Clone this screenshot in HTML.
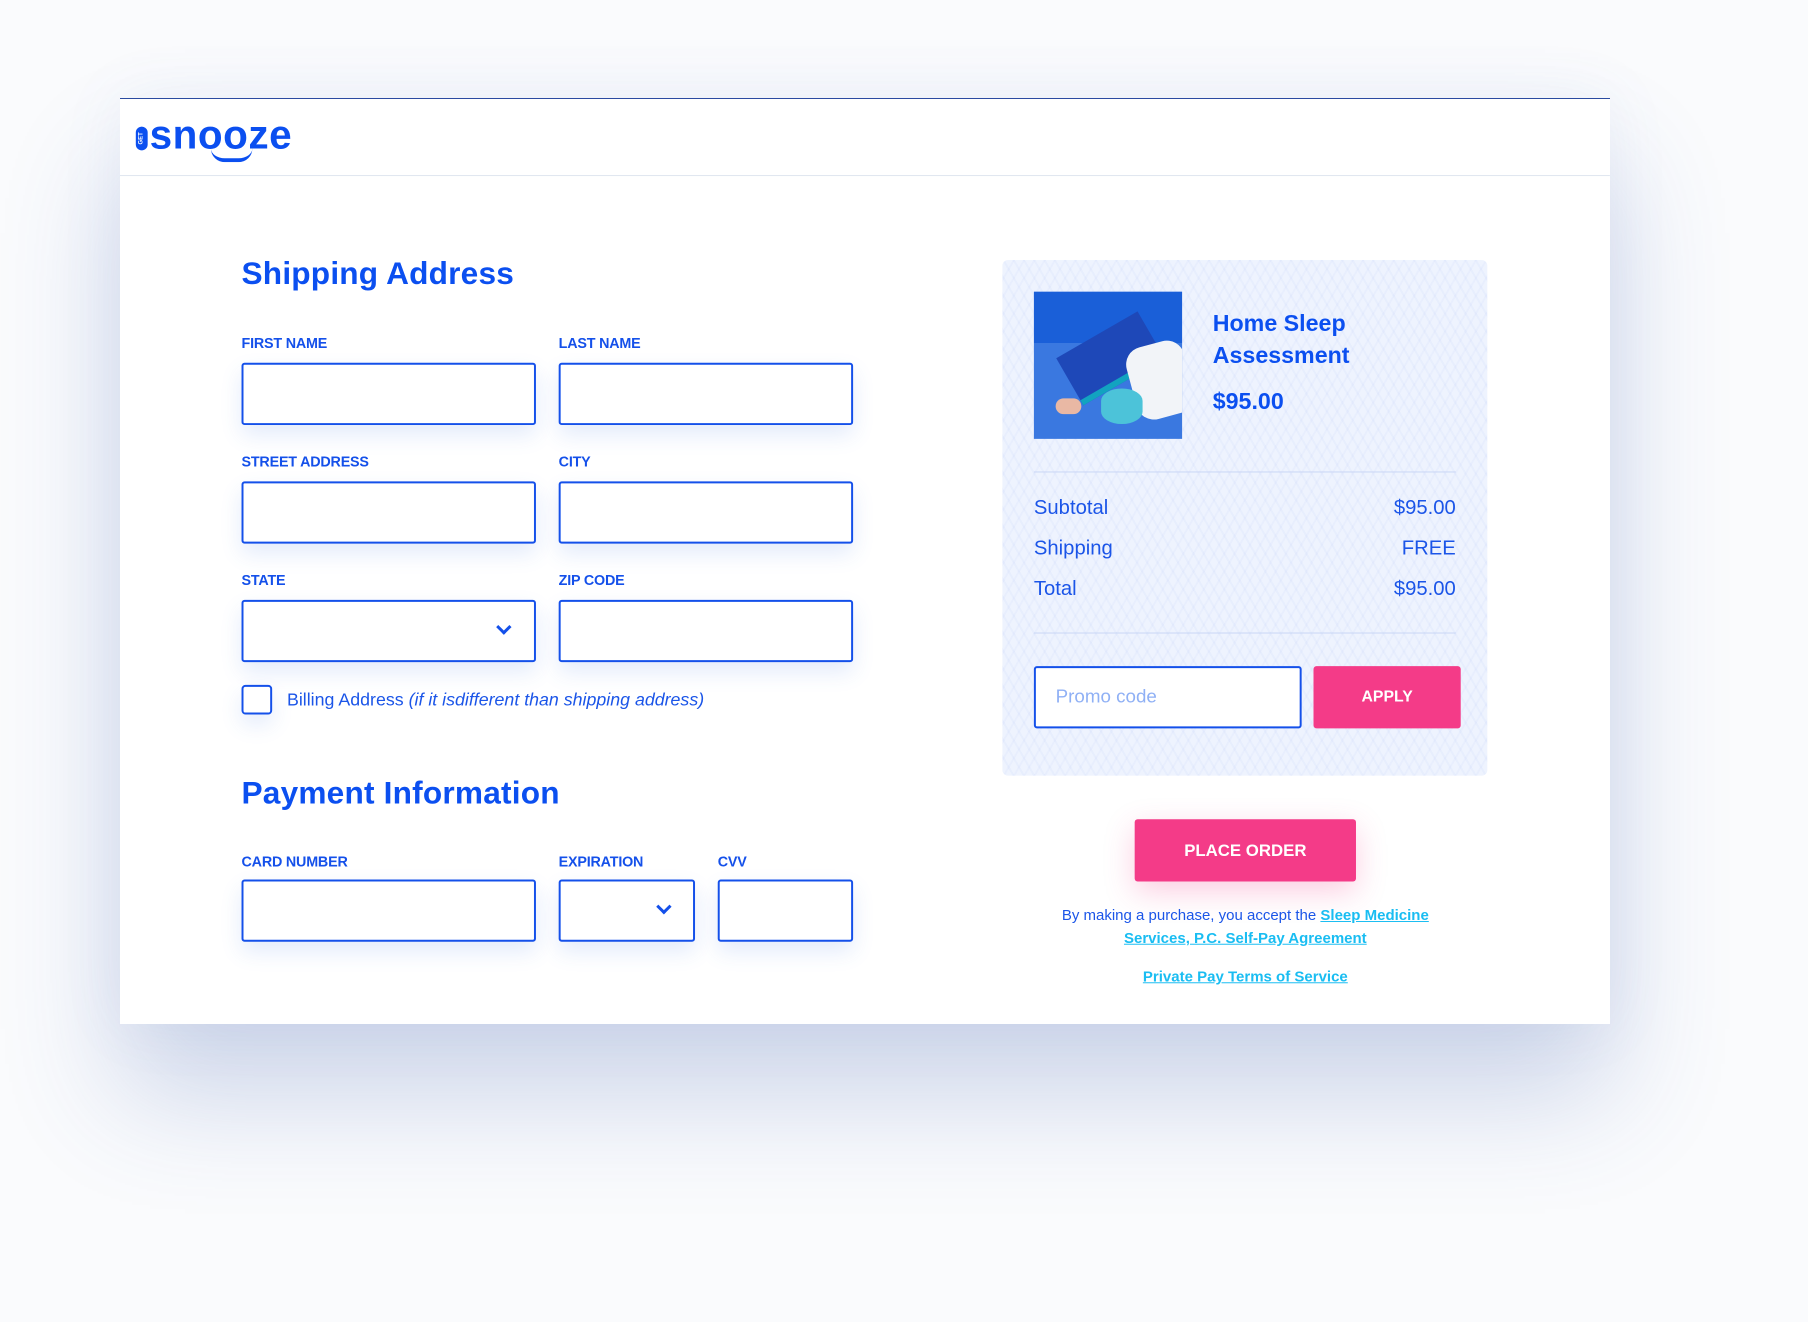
<!DOCTYPE html>
<html><head><meta charset="utf-8"><style>
*{box-sizing:border-box;margin:0;padding:0}
body{width:1808px;height:1322px;background:#fafbfd;font-family:"Liberation Sans",sans-serif;position:relative;overflow:hidden;color:#0b4ff0}
.card{position:absolute;left:120px;top:98px;width:1490px;height:926px;background:#fff;border-top:1px solid #2a4aa0;box-shadow:0 70px 110px rgba(60,90,170,.24),0 0 60px rgba(120,140,200,.08)}
.inner{position:absolute;left:0;top:0;width:1508px;height:937px;transform:scale(.988);transform-origin:0 0}
.hdr{position:absolute;left:0;top:0;width:1508px;height:78px;border-bottom:1px solid #dfe5ef}
.abs{position:absolute}
.h{font-weight:bold;font-size:32px;color:#0b4ff0;letter-spacing:.2px}
.lbl{font-size:14.5px;font-weight:bold;color:#1450ea;letter-spacing:-.2px}
.inp{position:absolute;border:2px solid #1450ea;border-radius:3px;background:#fff;box-shadow:0 10px 22px rgba(60,110,230,.14)}
.chev{position:absolute;width:11px;height:11px;border-right:3px solid #1450ea;border-bottom:3px solid #1450ea;transform:rotate(45deg)}
.panel{position:absolute;left:893px;top:163px;width:491px;height:522px;border-radius:6px;background:#eef3fe;
background-image:repeating-linear-gradient(60deg,rgba(120,150,240,.06) 0 2px,transparent 2px 9px),repeating-linear-gradient(-60deg,rgba(120,150,240,.05) 0 2px,transparent 2px 9px)}
.row{position:absolute;left:32px;width:427px;font-size:20.5px;color:#1b55e8;display:flex;justify-content:space-between}
.btn{position:absolute;background:#f43b88;color:#fff;font-weight:bold;display:flex;align-items:center;justify-content:center;border-radius:3px}
a{color:#19bdf2;font-weight:bold;text-decoration:underline}
</style></head><body>
<div class="card"><div class="inner">
 <div class="hdr">
  <div class="abs" style="left:16px;top:28px;width:12px;height:24px;border-radius:6px;background:#0b4ff0;color:#fff;font-size:6px;font-weight:bold;writing-mode:vertical-rl;transform:rotate(180deg);text-align:center;line-height:12px">GET</div>
  <div class="abs" style="left:30px;top:13px;font-size:41px;font-weight:bold;color:#0b4ff0;letter-spacing:0.5px">snooze</div>
  <div class="abs" style="left:92px;top:50px;width:42px;height:14px;border-bottom:4px solid #0b4ff0;border-radius:0 0 22px 22px"></div>
 </div>
 <div class="abs h" style="left:123px;top:158px">Shipping Address</div>
 <div class="abs lbl" style="left:123px;top:240px">FIRST NAME</div>
 <div class="abs lbl" style="left:444px;top:240px">LAST NAME</div>
 <div class="inp" style="left:123px;top:267px;width:298px;height:63px"></div>
 <div class="inp" style="left:444px;top:267px;width:298px;height:63px"></div>
 <div class="abs lbl" style="left:123px;top:360px">STREET ADDRESS</div>
 <div class="abs lbl" style="left:444px;top:360px">CITY</div>
 <div class="inp" style="left:123px;top:387px;width:298px;height:63px"></div>
 <div class="inp" style="left:444px;top:387px;width:298px;height:63px"></div>
 <div class="abs lbl" style="left:123px;top:480px">STATE</div>
 <div class="abs lbl" style="left:444px;top:480px">ZIP CODE</div>
 <div class="inp" style="left:123px;top:507px;width:298px;height:63px"><div class="chev" style="left:258px;top:20px"></div></div>
 <div class="inp" style="left:444px;top:507px;width:298px;height:63px"></div>
 <div class="inp" style="left:123px;top:593px;width:31px;height:30px;border-radius:4px"></div>
 <div class="abs" style="left:169px;top:598px;font-size:18px;color:#1b55e8">Billing Address <i>(if it isdifferent than shipping address)</i></div>
 <div class="abs h" style="left:123px;top:684px">Payment Information</div>
 <div class="abs lbl" style="left:123px;top:765px">CARD NUMBER</div>
 <div class="abs lbl" style="left:444px;top:765px">EXPIRATION</div>
 <div class="abs lbl" style="left:605px;top:765px">CVV</div>
 <div class="inp" style="left:123px;top:790px;width:298px;height:63px"></div>
 <div class="inp" style="left:444px;top:790px;width:138px;height:63px"><div class="chev" style="left:99px;top:20px"></div></div>
 <div class="inp" style="left:605px;top:790px;width:137px;height:63px"></div>

 <div class="panel">
  <div class="abs" style="left:32px;top:32px;width:150px;height:149px;overflow:hidden;background:linear-gradient(180deg,#1a5fd8 0 35%,#3a78e0 35% 100%)">
   <div class="abs" style="left:30px;top:40px;width:95px;height:55px;background:#1e48b8;transform:rotate(-30deg);border-bottom:6px solid #12a3c0"></div>
   <div class="abs" style="left:98px;top:52px;width:60px;height:75px;background:#f2f4f8;border-radius:18px;transform:rotate(-15deg)"></div>
   <div class="abs" style="left:68px;top:98px;width:42px;height:36px;background:#4cc3d9;border-radius:50%/35%"></div>
   <div class="abs" style="left:22px;top:108px;width:26px;height:16px;background:#e9b8a4;border-radius:8px"></div>
  </div>
  <div class="abs" style="left:213px;top:48px;font-size:23.5px;font-weight:bold;line-height:32px;color:#0b4ff0">Home Sleep<br>Assessment</div>
  <div class="abs" style="left:213px;top:130px;font-size:23.5px;font-weight:bold;color:#0b4ff0">$95.00</div>
  <div class="abs" style="left:32px;top:214px;width:427px;height:1px;background:#c9d6f5"></div>
  <div class="row" style="top:239px"><span>Subtotal</span><span>$95.00</span></div>
  <div class="row" style="top:280px"><span>Shipping</span><span>FREE</span></div>
  <div class="row" style="top:321px"><span>Total</span><span>$95.00</span></div>
  <div class="abs" style="left:32px;top:377px;width:427px;height:1px;background:#c9d6f5"></div>
  <div class="inp" style="left:32px;top:411px;width:271px;height:63px;box-shadow:none"><div class="abs" style="left:20px;top:19px;font-size:19px;color:#8fb0f5">Promo code</div></div>
  <div class="btn" style="left:315px;top:411px;width:149px;height:63px;font-size:16px">APPLY</div>
 </div>
 <div class="btn" style="left:1027px;top:729px;width:224px;height:63px;font-size:17px;box-shadow:0 10px 30px rgba(244,59,136,.25)">PLACE ORDER</div>
 <div class="abs" style="left:869px;top:815px;width:540px;text-align:center;font-size:15.2px;line-height:23px;color:#1b55e8">By making a purchase, you accept the <a>Sleep Medicine<br>Services, P.C. Self-Pay Agreement</a></div>
 <div class="abs" style="left:869px;top:880px;width:540px;text-align:center;font-size:15.2px"><a>Private Pay Terms of Service</a></div>
</div></div>
</body></html>
